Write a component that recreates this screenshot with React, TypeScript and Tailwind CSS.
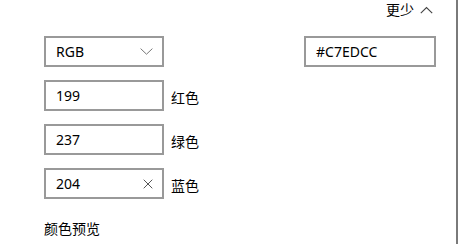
import React from "react";

function Box({ children, w = "w-[120px]" }: { children: React.ReactNode; w?: string }) {
  return (
    <div className={`${w} h-[31px] border-2 border-[#999999] bg-white flex items-center pl-[10px] pr-[8px] text-[14px] text-black`}>
      {children}
    </div>
  );
}

export default function App() {
  return (
    <div className="w-[461px] h-[244px] bg-white flex overflow-hidden [font-family:'Noto_Sans','Noto_Sans_CJK_SC',sans-serif]">
      <div className="w-[456px] flex flex-col">
        <div className="h-[18px] pt-[2px] flex items-center justify-end pr-[23px] text-[14px] leading-[16px] text-black gap-[6px]">
          <span>更少</span>
          <svg width="13" height="8" viewBox="0 0 13 8" fill="none">
            <path d="M0.8 7.2 L6.5 1.5 L12.2 7.2" stroke="#444" strokeWidth="1.1" />
          </svg>
        </div>
        <div className="flex flex-col pl-[44px] pr-[20px] mt-[18px] gap-[13px]">
          <div className="flex items-center">
            <Box>
              <span className="flex-1">RGB</span>
              <svg width="13" height="7" viewBox="0 0 13 7" fill="none" className="mr-[1px]">
                <path d="M0.6 0.6 L6.5 6.2 L12.4 0.6" stroke="#777" strokeWidth="1" />
              </svg>
            </Box>
            <div className="ml-auto">
              <Box w="w-[132px]">#C7EDCC</Box>
            </div>
          </div>
          <div className="flex items-center gap-[7px]">
            <Box>199</Box>
            <span className="text-[14px] text-black mt-[3px]">红色</span>
          </div>
          <div className="flex items-center gap-[7px]">
            <Box>237</Box>
            <span className="text-[14px] text-black mt-[3px]">绿色</span>
          </div>
          <div className="flex items-center gap-[7px]">
            <Box>
              <span className="flex-1">204</span>
              <svg width="10" height="10" viewBox="0 0 10 10" fill="none" className="mr-[1px]">
                <path d="M0.7 0.7 L9.3 9.3 M9.3 0.7 L0.7 9.3" stroke="#555" strokeWidth="1" />
              </svg>
            </Box>
            <span className="text-[14px] text-black mt-[3px]">蓝色</span>
          </div>
          <div className="text-[14px] text-black mt-[6px]">颜色预览</div>
        </div>
      </div>
      <div className="w-[2px] h-full bg-[#7a7a7a]" />
    </div>
  );
}
